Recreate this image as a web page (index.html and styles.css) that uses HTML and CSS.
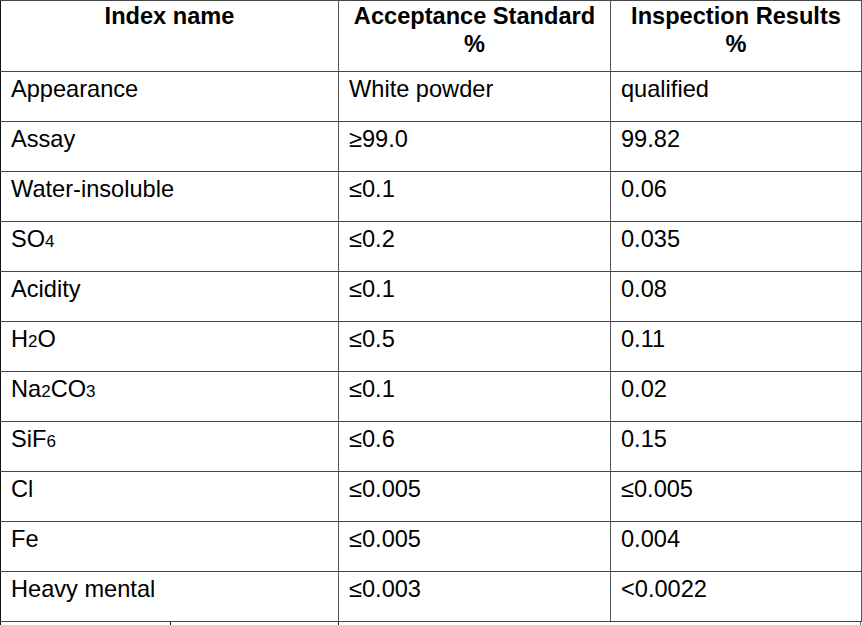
FILE: index.html
```html
<!DOCTYPE html>
<html>
<head>
<meta charset="utf-8">
<link rel="stylesheet" href="styles.css">
</head>
<body>
<table class="spec">
  <colgroup>
    <col class="c1"><col class="c2"><col class="c3">
  </colgroup>
  <thead>
    <tr>
      <th>Index name</th>
      <th>Acceptance Standard<br>%</th>
      <th>Inspection Results<br>%</th>
    </tr>
  </thead>
  <tbody>
    <tr><td>Appearance</td><td>White powder</td><td>qualified</td></tr>
    <tr><td>Assay</td><td>≥99.0</td><td>99.82</td></tr>
    <tr><td>Water-insoluble</td><td>≤0.1</td><td>0.06</td></tr>
    <tr><td>SO<span class="sub">4</span></td><td>≤0.2</td><td>0.035</td></tr>
    <tr><td>Acidity</td><td>≤0.1</td><td>0.08</td></tr>
    <tr><td>H<span class="sub">2</span>O</td><td>≤0.5</td><td>0.11</td></tr>
    <tr><td>Na<span class="sub">2</span>CO<span class="sub">3</span></td><td>≤0.1</td><td>0.02</td></tr>
    <tr><td>SiF<span class="sub">6</span></td><td>≤0.6</td><td>0.15</td></tr>
    <tr><td>Cl</td><td>≤0.005</td><td>≤0.005</td></tr>
    <tr><td>Fe</td><td>≤0.005</td><td>0.004</td></tr>
    <tr><td>Heavy mental</td><td>≤0.003</td><td>&lt;0.0022</td></tr>
  </tbody>
</table>
<div class="next-row">
  <div class="nc n1"></div>
  <div class="nc n2"></div>
  <div class="nc n3"></div>
</div>
</body>
</html>
```
FILE: styles.css
```css
html, body {
  margin: 0;
  padding: 0;
  background: #fff;
}

body {
  font-family: "Liberation Sans", Arial, sans-serif;
  color: #000;
  overflow: hidden;
}

.spec {
  border-collapse: collapse;
  table-layout: fixed;
  width: 861px;
  font-size: 23.6px;
  line-height: 28px;
}

.spec .c1 { width: 338px; }
.spec .c2 { width: 272px; }
.spec .c3 { width: 251px; }

.spec th,
.spec td {
  border-top: 1px solid #444;
  border-bottom: 1px solid #444;
  border-left: 1px solid #111;
  border-right: 1px solid #555;
  vertical-align: top;
  padding: 3px 10px 0 10px;
}

.spec th {
  height: 71px;
  font-weight: bold;
  text-align: center;
  padding-top: 1px;
  box-sizing: border-box;
}

.spec td {
  height: 50px;
  box-sizing: border-box;
  text-align: left;
}

.sub {
  font-size: 0.72em;
  line-height: 0;
}

.next-row {
  display: flex;
  width: 861px;
  height: 10px;
}

.nc {
  border-left: 1px solid #111;
  box-sizing: border-box;
}

.n1 { width: 170px; }
.n2 { width: 168px; }
.n3 { width: 523px; border-right: 1px solid #555; }
```
